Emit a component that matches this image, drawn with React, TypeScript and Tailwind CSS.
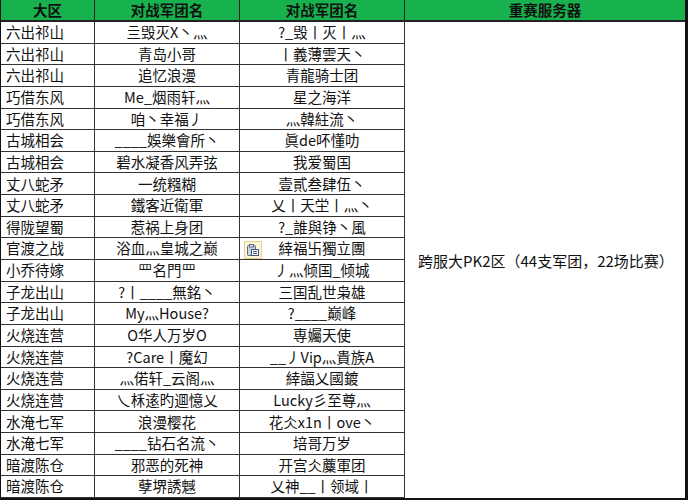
import React from "react";

const rows: [string, string, string][] = [
  ["六出祁山", "亖毁灭X丶灬", "?_毁丨灭丨灬"],
  ["六出祁山", "青岛小哥", "丨義薄雲天丶"],
  ["六出祁山", "追忆浪漫", "青龍骑士团"],
  ["巧借东风", "Me_烟雨轩灬", "星之海洋"],
  ["巧借东风", "咱丶幸福丿", "灬韓紸流丶"],
  ["古城相会", "____娛樂會所丶", "眞de吥懂叻"],
  ["古城相会", "碧水凝香风弄弦", "我爱蜀国"],
  ["丈八蛇矛", "一统糨糊", "壹貳叁肆伍丶"],
  ["丈八蛇矛", "鐵客近衛軍", "乂丨天坣丨灬丶"],
  ["得陇望蜀", "惹祸上身团", "?_誰與铮丶風"],
  ["官渡之战", "浴血灬皇城之巅", "緈福卐獨立團"],
  ["小乔待嫁", "罒名門罒", "丿灬倾国_倾城"],
  ["子龙出山", "?丨____無銘丶", "三国乱世枭雄"],
  ["子龙出山", "My灬House?", "?____巅峰"],
  ["火烧连营", "O华人万岁O", "専孎天使"],
  ["火烧连营", "?Care丨魔幻", "__丿Vip灬貴族A"],
  ["火烧连营", "灬偌轩_云阁灬", "緈諨乂國鍍"],
  ["火烧连营", "乀柇逺旳逥憶乂", "Lucky彡至尊灬"],
  ["水淹七军", "浪漫樱花", "花仌x1n丨ove丶"],
  ["水淹七军", "____钻石名流丶", "培哥万岁"],
  ["暗渡陈仓", "邪恶的死神", "开宫仌蘪軍团"],
  ["暗渡陈仓", "孽堺誘魊", "乂神__丨领域丨"],
];

function PasteIcon() {
  return (
    <div className="absolute left-[4px] top-[3px] w-[18px] h-[18px] bg-[#fdf6df] border border-[#e8cf8e] flex items-center justify-center">
      <svg width="14" height="14" viewBox="0 0 14 14">
        <rect x="1.5" y="2.5" width="8" height="10" rx="1" fill="#c9d3de" stroke="#5a6b80" />
        <rect x="3.5" y="1.5" width="4" height="2.5" fill="#e9eef3" stroke="#5a6b80" />
        <rect x="5.5" y="6.5" width="7" height="6" fill="#ffffff" stroke="#3d5a80" />
        <line x1="7" y1="8.5" x2="11" y2="8.5" stroke="#3d5a80" />
        <line x1="7" y1="10.5" x2="11" y2="10.5" stroke="#3d5a80" />
      </svg>
    </div>
  );
}

export default function App() {
  const font = { fontFamily: '"Noto Sans CJK SC", "Microsoft YaHei", sans-serif' };
  return (
    <div className="w-[689px] h-[500px] bg-white overflow-hidden" style={font}>
      <div className="w-[688px] h-[500px] border-l border-r-[3px] border-b-2 border-[#111] grid grid-cols-[94px_145px_165px_280px] grid-rows-[22px_repeat(22,minmax(0,1fr))] text-[14.5px] text-[#111] leading-none">
        <div className="bg-[#17b14d] border-r border-b-2 border-[#222] flex items-center justify-center font-bold">大区</div>
        <div className="bg-[#17b14d] border-r border-b-2 border-[#222] flex items-center justify-center font-bold">对战军团名</div>
        <div className="bg-[#17b14d] border-r border-b-2 border-[#222] flex items-center justify-center font-bold">对战军团名</div>
        <div className="bg-[#17b14d] border-b-2 border-[#222] flex items-center justify-center font-bold">重赛服务器</div>
        {rows.map((r, i) => (
          <React.Fragment key={i}>
            <div
              className="border-r border-b border-[#333] flex items-center pl-[5px] whitespace-nowrap"
              style={{ gridRow: i + 2, gridColumn: 1 }}
            >
              {r[0]}
            </div>
            <div
              className="border-r border-b border-[#333] flex items-center justify-center whitespace-nowrap"
              style={{ gridRow: i + 2, gridColumn: 2 }}
            >
              {r[1]}
            </div>
            <div
              className="relative border-r border-b border-[#333] flex items-center justify-center whitespace-nowrap"
              style={{ gridRow: i + 2, gridColumn: 3 }}
            >
              {i === 10 && <PasteIcon />}
              {r[2]}
            </div>
          </React.Fragment>
        ))}
        <div className="col-start-4 row-start-2 row-span-22 flex items-center pl-[13px] whitespace-nowrap text-[15px]">
          跨服大PK2区（44支军团，22场比赛）
        </div>
      </div>
    </div>
  );
}
